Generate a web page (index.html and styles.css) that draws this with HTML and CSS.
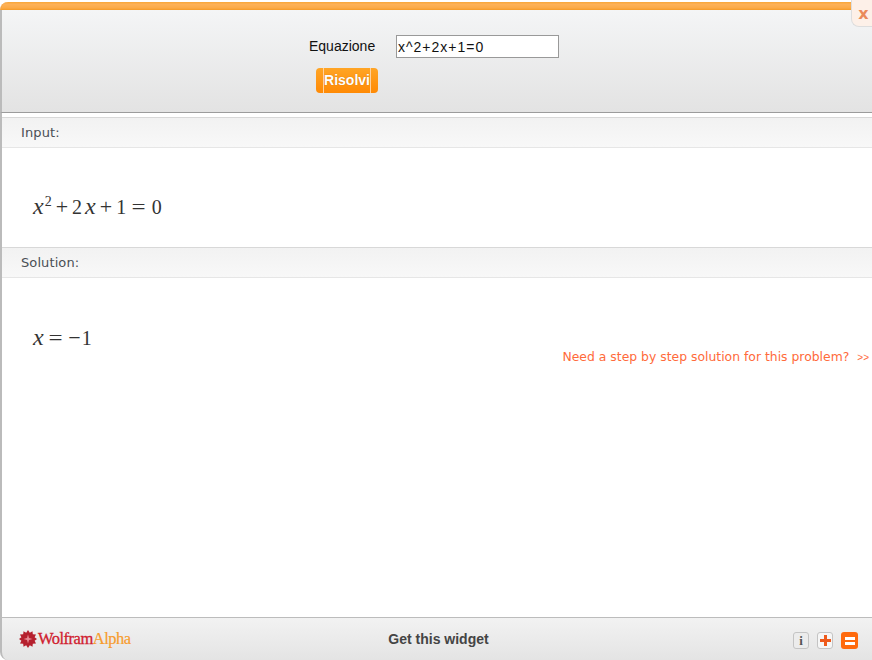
FILE: index.html
```html
<!DOCTYPE html>
<html lang="it">
<head>
<meta charset="utf-8">
<title>Equazione</title>
<link rel="stylesheet" href="styles.css">
</head>
<body>
<div class="widget">
  <div class="topbar"></div>
  <button class="close" type="button">x</button>
  <form class="query">
    <div class="query-row">
      <label class="query-label" for="eq">Equazione</label>
      <input class="query-input" id="eq" type="text" value="x^2+2x+1=0">
    </div>
    <button class="solve" type="button">Risolvi</button>
  </form>
  <div class="spacer"></div>
  <div class="pod-title">Input:</div>
  <div class="pod input-pod">
    <div class="math"><i>x</i><sup>2</sup><span class="op">+</span>2<span class="thin"></span><i>x</i><span class="op">+</span>1<span class="eq">=</span>0</div>
  </div>
  <div class="pod-title">Solution:</div>
  <div class="pod solution-pod">
    <div class="math"><i>x</i><span class="eq">=</span><span class="minus">&minus;</span>1</div>
    <a class="step" href="#">Need a step by step solution for this problem?<span class="arrows">&gt;&gt;</span></a>
  </div>
  <footer class="footer">
    <div class="logo">
      <svg class="logo-star" width="18" height="18" viewBox="0 0 18 18" aria-hidden="true">
        <polygon fill="#b5202e" points="9,0 10.8,2.8 13.5,1.2 13.8,4.2 17,4.4 15.6,7.2 18,9 15.6,10.8 17,13.6 13.8,13.8 13.5,16.8 10.8,15.2 9,18 7.2,15.2 4.5,16.8 4.2,13.8 1,13.6 2.4,10.8 0,9 2.4,7.2 1,4.4 4.2,4.2 4.5,1.2 7.2,2.8"/>
        <polygon fill="#e88a94" points="9,4.5 10,8 13.5,9 10,10 9,13.5 8,10 4.5,9 8,8"/>
      </svg>
      <span class="logo-text"><span class="wolfram">Wolfram</span><span class="alpha">Alpha</span></span>
    </div>
    <a class="get" href="#">Get this widget</a>
    <div class="tools">
      <span class="tool tool-info">i</span>
      <span class="tool tool-plus"><svg width="11" height="11" viewBox="0 0 11 11" aria-hidden="true"><path d="M4 0h3v4h4v3H7v4H4V7H0V4h4z" fill="#ee5a1c"/></svg></span>
      <span class="tool tool-eq"><svg width="10" height="8" viewBox="0 0 10 8" aria-hidden="true"><path d="M0 0h10v3H0zM0 5h10v3H0z" fill="#fff"/></svg></span>
    </div>
  </footer>
</div>
</body>
</html>
```
FILE: styles.css
```css
* { box-sizing: border-box; }
html, body { margin: 0; height: 100%; background: #fff; }
body { overflow: hidden; }
.widget {
  position: relative;
  width: 872px;
  height: 660px;
  padding-top: 2px;
  display: flex;
  flex-direction: column;
  font-family: "DejaVu Sans", sans-serif;
}
.topbar {
  height: 8px;
  flex: none;
  background: linear-gradient(#f9a637, #fdb158 30%, #fcaa45 75%, #f49a28);
  border-top-left-radius: 8px;
  border-left: 1px solid #f0a040;
}
.close {
  position: absolute;
  top: 0;
  right: 0;
  width: 21px;
  height: 27px;
  padding: 0 0 0 3px;
  border: 0;
  border-left: 1px solid #ddd;
  border-bottom: 1px solid #ddd;
  border-bottom-left-radius: 8px;
  background: #fdf0e8;
  color: #ea8a5c;
  font: bold 16px "DejaVu Sans", sans-serif;
  line-height: 27px;
}
.query {
  height: 103px;
  flex: none;
  border-left: 2px solid #bbb;
  border-bottom: 1px solid #9c9c9c;
  background: linear-gradient(#f4f5f6, #e3e3e3);
  padding-top: 25px;
  display: flex;
  flex-direction: column;
}
.query-row {
  display: flex;
  align-items: center;
  height: 23px;
  padding-left: 307px;
}
.query-label {
  width: 87px;
  font: 14px "Liberation Sans", Arial, sans-serif;
  color: #111;
  position: relative;
  top: -1px;
}
.query-input {
  width: 163px;
  height: 23px;
  padding: 2px 1px 1px;
  border: 1px solid #999;
  background: #fff;
  color: #111;
  font: 14px "Liberation Sans", Arial, sans-serif;
  letter-spacing: 1px;
  border-radius: 0;
  outline: 0;
}
.solve {
  width: 62px;
  height: 25px;
  margin: 10px 0 0 314px;
  padding: 0 0 2px;
  border: 0;
  border-radius: 4px;
  background:
    linear-gradient(#ffd2a0, #ffd2a0) 7px 0 / 1px 100% no-repeat,
    linear-gradient(#ffd2a0, #ffd2a0) 54px 0 / 1px 100% no-repeat,
    linear-gradient(#ffa526, #ff8a05);
  color: #fff;
  font: bold 14px "Liberation Sans", Arial, sans-serif;
  text-shadow: 0 0 1px rgba(160, 80, 0, .6);
}
.spacer {
  height: 4px;
  flex: none;
  border-left: 2px solid #bbb;
}
.pod-title {
  height: 31px;
  flex: none;
  padding: 7px 0 0 19px;
  margin-left: 2px;
  border-top: 1px solid #d8d8d8;
  border-bottom: 1px solid #e6e6e6;
  background: linear-gradient(#f2f2f2, #f8f8f8);
  font-size: 13px;
  line-height: 16px;
  color: #4a4f55;
  letter-spacing: .1px;
  box-shadow: -2px 0 0 #bbb;
}
.pod {
  flex: none;
  border-left: 2px solid #bbb;
  position: relative;
}
.input-pod { height: 99px; padding: 44px 0 0 31px; }
.solution-pod { height: 339px; padding: 45px 0 0 31px; }
.math {
  font: 20px/30px "Liberation Serif", "Times New Roman", serif;
  color: #333;
  white-space: nowrap;
}
.math i { font-size: 24px; line-height: 0; }
.math sup { font-size: 14px; line-height: 0; vertical-align: 8px; margin-left: 1px; }
.op { margin: 0 4px; font-size: 22px; line-height: 0; }
.eq {
  display: inline-block;
  margin: 0 7px 0 7.3px;
  transform: scaleX(1.25);
}
.solution-pod .eq { margin: 0 7.3px 0 6px; }
.minus { margin-right: 1px; font-size: 22px; line-height: 0; }
.thin { display: inline-block; width: 3px; }
.step {
  position: absolute;
  top: 70px;
  right: 3px;
  font-size: 12.4px;
  line-height: 18px;
  color: #ff6a3a;
  text-decoration: none;
  white-space: nowrap;
}
.arrows { margin-left: 8px; font: 10px "Liberation Sans", Arial, sans-serif; }
.footer {
  flex: 1;
  border-top: 1px solid #bcbcbc;
  border-left: 2px solid #bbb;
  border-bottom-left-radius: 8px;
  background: linear-gradient(#f2f2f2, #e4e4e4);
  display: grid;
  grid-template-columns: 1fr auto 1fr;
  align-items: center;
  padding: 0 14px 1px 17px;
}
.logo { display: flex; align-items: center; gap: 1px; }
.logo-text { font: 16.5px "Liberation Serif", "Times New Roman", serif; letter-spacing: -.5px; }
.wolfram { color: #d0202f; -webkit-text-stroke: .3px #d0202f; }
.alpha { color: #f79c2e; -webkit-text-stroke: .2px #f79c2e; }
.get {
  font: bold 14px "Liberation Sans", Arial, sans-serif;
  color: #444;
  text-decoration: none;
}
.tools { display: flex; justify-content: flex-end; gap: 8px; align-items: center; margin-top: 4px; }
.tool {
  width: 16px;
  height: 17px;
  display: flex;
  align-items: center;
  justify-content: center;
  border-radius: 3px;
}
.tool-info {
  border: 1px solid #c4c4c4;
  background: #ececec;
  font: bold 13px "Liberation Serif", serif;
  color: #555;
}
.tool-plus { border: 1px solid #c4c4c4; background: #f6f6f6; }
.tool-eq { width: 17px; background: #ff6a0d; }
```
